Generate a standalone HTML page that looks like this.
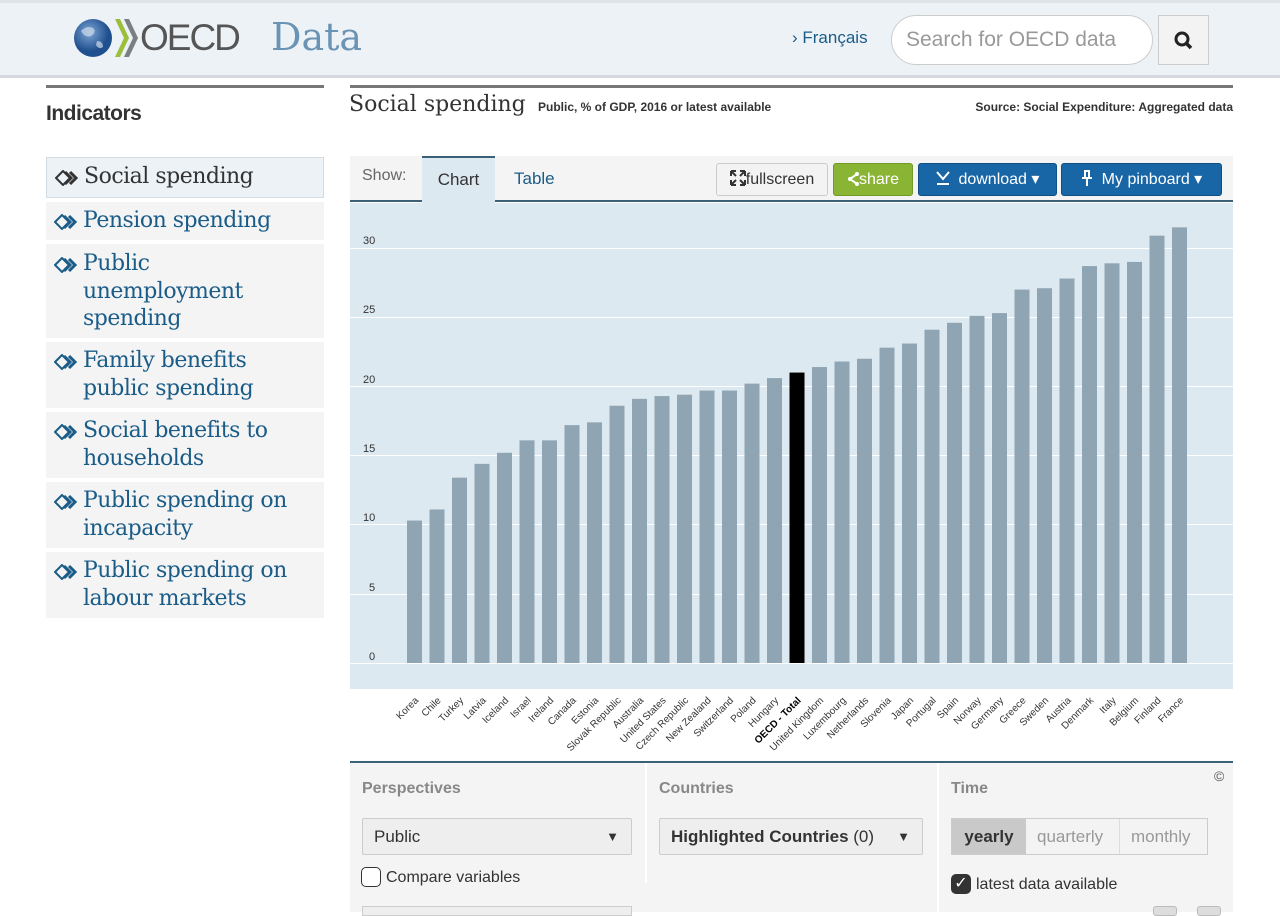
<!DOCTYPE html>
<html><head><meta charset="utf-8"><style>
*{box-sizing:border-box;margin:0;padding:0}
body{width:1280px;height:912px;overflow:hidden;background:#fff;font-family:"Liberation Sans",sans-serif;position:relative}
.abs{position:absolute}
.hdr{left:0;top:0;width:1280px;height:78px;background:#edf2f7;border-top:3px solid #dfe3e7;border-bottom:3px solid #d5d9dd}
.side{left:46px;width:278px;background:#f4f4f4;font-family:"DejaVu Serif","Liberation Serif",serif;font-size:22px;line-height:27.5px;color:#1a5c88;padding-left:37px;letter-spacing:-0.5px}
.side svg{position:absolute;left:8px}
.btn{top:163px;height:33px;border-radius:3px;font-size:16px;line-height:31px;text-align:center}
.sec{font-size:16px;color:#888;font-weight:bold}
.sel{height:37px;background:#eee;border:1px solid #ccc;border-radius:2px;font-size:17px;line-height:35px;padding-left:11px;color:#333}
</style></head><body>
<div class="abs hdr"></div>
<svg class="abs" style="left:73px;top:17px" width="44" height="42"><defs><radialGradient id="g" cx="40%" cy="35%"><stop offset="0" stop-color="#7fa7d6"/><stop offset="1" stop-color="#1f4f8e"/></radialGradient></defs><circle cx="20" cy="21" r="19" fill="url(#g)"/><path d="M8 14 q6-6 12-3 q4 4-2 8 q-6 2-10-5z M24 24 q6 0 6 6 q-4 3-7-2z" fill="#cfdbe8" opacity=".7"/></svg>
<svg class="abs" style="left:113px;top:17px" width="28" height="42"><path d="M2 2 L11 21 L2 40 L7 40 L16 21 L7 2Z" fill="#9bbf3b"/><path d="M11 2 L20 21 L11 40 L16 40 L25 21 L16 2Z" fill="#7c7f82"/></svg>
<div class="abs" style="left:140px;top:17px;font-size:37px;color:#555;letter-spacing:-2px">OECD</div>
<div class="abs" style="left:271px;top:15px;font-family:'DejaVu Serif','Liberation Serif',serif;font-size:38px;color:#6b93b4">Data</div>
<div class="abs" style="left:792px;top:28px;font-size:17px;color:#1a5c88">› Français</div>
<div class="abs" style="left:891px;top:15px;width:262px;height:50px;border:1px solid #ccc;border-radius:25px;background:#fff;font-size:21px;color:#999;line-height:48px;padding-left:14px">Search for OECD data</div>
<div class="abs" style="left:1158px;top:15px;width:51px;height:50px;border:1px solid #ccc;background:#f3f3f3"><svg width="51" height="50"><circle cx="23" cy="23" r="6" stroke="#222" stroke-width="3" fill="none"/><path d="M27 27 L32 32" stroke="#222" stroke-width="3.5"/></svg></div>

<div class="abs" style="left:46px;top:85px;width:278px;height:3px;background:#777"></div>
<div class="abs" style="left:46px;top:102px;font-size:21px;font-weight:bold;color:#333;letter-spacing:-0.5px">Indicators</div>

<div class="abs side" style="top:157px;height:41px;background:#edf2f7;border:1px solid #d3dbe3;color:#333;padding-top:5px"><svg style="top:12px" width="26" height="16"><path d="M1 8 L8 1 L15 8 L8 15Z" fill="none" stroke="#333" stroke-width="2"/><path d="M10 2 L16 8 L10 14 M15 2 L21 8 L15 14" fill="none" stroke="#333" stroke-width="3"/></svg>Social spending</div>
<div class="abs side" style="top:202px;height:38px;padding-top:5px"><svg style="top:12px" width="26" height="16"><path d="M1 8 L8 1 L15 8 L8 15Z" fill="none" stroke="#1a5c88" stroke-width="2"/><path d="M10 2 L16 8 L10 14 M15 2 L21 8 L15 14" fill="none" stroke="#1a5c88" stroke-width="3"/></svg>Pension spending</div>
<div class="abs side" style="top:244px;height:94px;padding-top:6px"><svg style="top:13px" width="26" height="16"><path d="M1 8 L8 1 L15 8 L8 15Z" fill="none" stroke="#1a5c88" stroke-width="2"/><path d="M10 2 L16 8 L10 14 M15 2 L21 8 L15 14" fill="none" stroke="#1a5c88" stroke-width="3"/></svg>Public<br>unemployment<br>spending</div>
<div class="abs side" style="top:342px;height:66px;padding-top:5px"><svg style="top:12px" width="26" height="16"><path d="M1 8 L8 1 L15 8 L8 15Z" fill="none" stroke="#1a5c88" stroke-width="2"/><path d="M10 2 L16 8 L10 14 M15 2 L21 8 L15 14" fill="none" stroke="#1a5c88" stroke-width="3"/></svg>Family benefits<br>public spending</div>
<div class="abs side" style="top:412px;height:66px;padding-top:5px"><svg style="top:12px" width="26" height="16"><path d="M1 8 L8 1 L15 8 L8 15Z" fill="none" stroke="#1a5c88" stroke-width="2"/><path d="M10 2 L16 8 L10 14 M15 2 L21 8 L15 14" fill="none" stroke="#1a5c88" stroke-width="3"/></svg>Social benefits to<br>households</div>
<div class="abs side" style="top:482px;height:66px;padding-top:5px"><svg style="top:12px" width="26" height="16"><path d="M1 8 L8 1 L15 8 L8 15Z" fill="none" stroke="#1a5c88" stroke-width="2"/><path d="M10 2 L16 8 L10 14 M15 2 L21 8 L15 14" fill="none" stroke="#1a5c88" stroke-width="3"/></svg>Public spending on<br>incapacity</div>
<div class="abs side" style="top:552px;height:66px;padding-top:5px"><svg style="top:12px" width="26" height="16"><path d="M1 8 L8 1 L15 8 L8 15Z" fill="none" stroke="#1a5c88" stroke-width="2"/><path d="M10 2 L16 8 L10 14 M15 2 L21 8 L15 14" fill="none" stroke="#1a5c88" stroke-width="3"/></svg>Public spending on<br>labour markets</div>

<div class="abs" style="left:350px;top:85px;width:883px;height:3px;background:#777"></div>
<div class="abs" style="left:349px;top:92px;font-family:'DejaVu Serif','Liberation Serif',serif;font-size:22px;color:#333">Social spending</div>
<div class="abs" style="left:538px;top:100px;font-size:12px;font-weight:bold;color:#333">Public, % of GDP, 2016 or latest available</div>
<div class="abs" style="left:967px;top:100px;font-size:12px;font-weight:bold;color:#333;width:266px;text-align:right">Source: Social Expenditure: Aggregated data</div>

<div class="abs" style="left:350px;top:156px;width:883px;height:46px;background:#f4f4f4;border-bottom:2px solid #3d6079"></div>
<div class="abs" style="left:362px;top:167px;font-size:16px;color:#666">Show:</div>
<div class="abs" style="left:422px;top:156px;width:73px;height:47px;background:#dde9f1;border-top:2px solid #3d6079;font-size:17px;color:#333;text-align:center;line-height:44px">Chart</div>
<div class="abs" style="left:514px;top:169px;font-size:17px;color:#1a5c88">Table</div>
<div class="abs btn" style="left:716px;width:112px;background:#f3f3f3;border:1px solid #ccc;color:#333"><svg width="16" height="16" style="vertical-align:-2px"><path d="M1 1h5M1 1v5M15 1h-5M15 1v5M1 15h5M1 15v-5M15 15h-5M15 15v-5M2 2l4 4M14 2l-4 4M2 14l4-4M14 14l-4-4" stroke="#333" stroke-width="2" fill="none"/></svg>fullscreen</div>
<div class="abs btn" style="left:833px;width:80px;background:#8ab433;border:1px solid #729a26;color:#fff"><svg width="12" height="14" style="vertical-align:-2px"><path d="M10 2 L3 7 L10 12" stroke="#fff" stroke-width="2" fill="none"/><circle cx="10" cy="2" r="2" fill="#fff"/><circle cx="3" cy="7" r="2" fill="#fff"/><circle cx="10" cy="12" r="2" fill="#fff"/></svg>share</div>
<div class="abs btn" style="left:918px;width:139px;background:#1866a6;border:1px solid #0f4f84;color:#fff"><svg width="14" height="16" style="vertical-align:-2px"><path d="M1 2 L7 9 L13 2 M1 14 H13" stroke="#fff" stroke-width="2" fill="none"/></svg>&nbsp; download ▾</div>
<div class="abs btn" style="left:1061px;width:161px;background:#1866a6;border:1px solid #0f4f84;color:#fff"><svg width="12" height="16" style="vertical-align:-2px"><path d="M3 1 H9 M4 1 V8 M8 1 V8 M1 8 H11 M6 8 V16" stroke="#fff" stroke-width="2" fill="none"/></svg>&nbsp; My pinboard ▾</div>

<div class="abs" style="left:350px;top:203px;width:883px;height:486px;background:#dde9f1"></div>
<svg class="abs" style="left:0;top:0" width="1280" height="760">
<g stroke="#fff" stroke-width="1">
<line x1="350" x2="1233" y1="248.5" y2="248.5"/><line x1="350" x2="1233" y1="317.5" y2="317.5"/><line x1="350" x2="1233" y1="386.5" y2="386.5"/><line x1="350" x2="1233" y1="455.5" y2="455.5"/><line x1="350" x2="1233" y1="524.5" y2="524.5"/><line x1="350" x2="1233" y1="594.5" y2="594.5"/><line x1="350" x2="1233" y1="663.5" y2="663.5"/>
</g>
<g font-size="11" fill="#333"><text x="363" y="244">30</text><text x="363" y="313">25</text><text x="363" y="383">20</text><text x="363" y="452">15</text><text x="363" y="521">10</text><text x="369" y="591">5</text><text x="369" y="660">0</text></g>
<g transform="matrix(1 0 0 -13.83 0 663)" fill="#8fa5b3">
<rect x="407" width="15" height="10.3"/><rect x="429.5" width="15" height="11.1"/><rect x="452" width="15" height="13.4"/><rect x="474.5" width="15" height="14.4"/><rect x="497" width="15" height="15.2"/><rect x="519.5" width="15" height="16.1"/><rect x="542" width="15" height="16.1"/><rect x="564.5" width="15" height="17.2"/><rect x="587" width="15" height="17.4"/><rect x="609.5" width="15" height="18.6"/><rect x="632" width="15" height="19.1"/><rect x="654.5" width="15" height="19.3"/><rect x="677" width="15" height="19.4"/><rect x="699.5" width="15" height="19.7"/><rect x="722" width="15" height="19.7"/><rect x="744.5" width="15" height="20.2"/><rect x="767" width="15" height="20.6"/><rect x="789.5" width="15" height="21.0" fill="#000"/><rect x="812" width="15" height="21.4"/><rect x="834.5" width="15" height="21.8"/><rect x="857" width="15" height="22.0"/><rect x="879.5" width="15" height="22.8"/><rect x="902" width="15" height="23.1"/><rect x="924.5" width="15" height="24.1"/><rect x="947" width="15" height="24.6"/><rect x="969.5" width="15" height="25.1"/><rect x="992" width="15" height="25.3"/><rect x="1014.5" width="15" height="27.0"/><rect x="1037" width="15" height="27.1"/><rect x="1059.5" width="15" height="27.8"/><rect x="1082" width="15" height="28.7"/><rect x="1104.5" width="15" height="28.9"/><rect x="1127" width="15" height="29.0"/><rect x="1149.5" width="15" height="30.9"/><rect x="1172" width="15" height="31.5"/>
</g>
<g text-anchor="end" font-size="10" fill="#333">
<text transform="translate(419,701) rotate(-45)">Korea</text><text transform="translate(441.5,701) rotate(-45)">Chile</text><text transform="translate(464,701) rotate(-45)">Turkey</text><text transform="translate(486.5,701) rotate(-45)">Latvia</text><text transform="translate(509,701) rotate(-45)">Iceland</text><text transform="translate(531.5,701) rotate(-45)">Israel</text><text transform="translate(554,701) rotate(-45)">Ireland</text><text transform="translate(576.5,701) rotate(-45)">Canada</text><text transform="translate(599,701) rotate(-45)">Estonia</text><text transform="translate(621.5,701) rotate(-45)">Slovak Republic</text><text transform="translate(644,701) rotate(-45)">Australia</text><text transform="translate(666.5,701) rotate(-45)">United States</text><text transform="translate(689,701) rotate(-45)">Czech Republic</text><text transform="translate(711.5,701) rotate(-45)">New Zealand</text><text transform="translate(734,701) rotate(-45)">Switzerland</text><text transform="translate(756.5,701) rotate(-45)">Poland</text><text transform="translate(779,701) rotate(-45)">Hungary</text><text transform="translate(801.5,701) rotate(-45)" font-weight="bold" fill="#000">OECD - Total</text><text transform="translate(824,701) rotate(-45)">United Kingdom</text><text transform="translate(846.5,701) rotate(-45)">Luxembourg</text><text transform="translate(869,701) rotate(-45)">Netherlands</text><text transform="translate(891.5,701) rotate(-45)">Slovenia</text><text transform="translate(914,701) rotate(-45)">Japan</text><text transform="translate(936.5,701) rotate(-45)">Portugal</text><text transform="translate(959,701) rotate(-45)">Spain</text><text transform="translate(981.5,701) rotate(-45)">Norway</text><text transform="translate(1004,701) rotate(-45)">Germany</text><text transform="translate(1026.5,701) rotate(-45)">Greece</text><text transform="translate(1049,701) rotate(-45)">Sweden</text><text transform="translate(1071.5,701) rotate(-45)">Austria</text><text transform="translate(1094,701) rotate(-45)">Denmark</text><text transform="translate(1116.5,701) rotate(-45)">Italy</text><text transform="translate(1139,701) rotate(-45)">Belgium</text><text transform="translate(1161.5,701) rotate(-45)">Finland</text><text transform="translate(1184,701) rotate(-45)">France</text>
</g>
</svg>

<div class="abs" style="left:350px;top:761px;width:883px;height:151px;background:#f4f4f4;border-top:2px solid #3d6079"></div>
<div class="abs" style="left:645px;top:763px;width:2px;height:120px;background:#fff"></div>
<div class="abs" style="left:937px;top:763px;width:2px;height:149px;background:#fff"></div>
<div class="abs sec" style="left:362px;top:780px">Perspectives</div>
<div class="abs sec" style="left:659px;top:780px">Countries</div>
<div class="abs sec" style="left:951px;top:780px">Time</div>
<div class="abs" style="left:1214px;top:768px;font-size:14px;color:#555">©</div>
<div class="abs sel" style="left:362px;top:818px;width:270px">Public<span style="position:absolute;right:12px;font-size:13px">▼</span></div>
<div class="abs sel" style="left:659px;top:818px;width:264px"><b>Highlighted Countries</b> (0)<span style="position:absolute;right:12px;font-size:13px">▼</span></div>
<div class="abs" style="left:951px;top:818px;width:257px;height:37px;border:1px solid #ccc;background:#f3f3f3;font-size:17px;line-height:35px;color:#999">
<span style="position:absolute;left:0;top:0;width:74px;height:35px;background:#c9c9c9;color:#333;font-weight:bold;text-align:center">yearly</span>
<span style="position:absolute;left:85px">quarterly</span><span style="position:absolute;left:167px;top:0;width:1px;height:35px;background:#ddd"></span><span style="position:absolute;left:179px">monthly</span></div>
<div class="abs" style="left:361px;top:867px;width:20px;height:20px;border:1.5px solid #333;border-radius:5px;background:#fff"></div>
<div class="abs" style="left:386px;top:869px;font-size:16px;color:#333">Compare variables</div>
<div class="abs" style="left:951px;top:874px;width:20px;height:20px;border-radius:5px;background:#333;color:#fff;font-size:16px;text-align:center;line-height:20px">✓</div>
<div class="abs" style="left:976px;top:876px;font-size:16px;color:#333">latest data available</div>
<div class="abs" style="left:362px;top:906px;width:270px;height:10px;border:1px solid #ccc;background:#eee"></div>
<div class="abs" style="left:1153px;top:906px;width:24px;height:10px;border:1px solid #bbb;background:#ddd;border-radius:3px"></div>
<div class="abs" style="left:1197px;top:906px;width:24px;height:10px;border:1px solid #bbb;background:#ddd;border-radius:3px"></div>
</body></html>
